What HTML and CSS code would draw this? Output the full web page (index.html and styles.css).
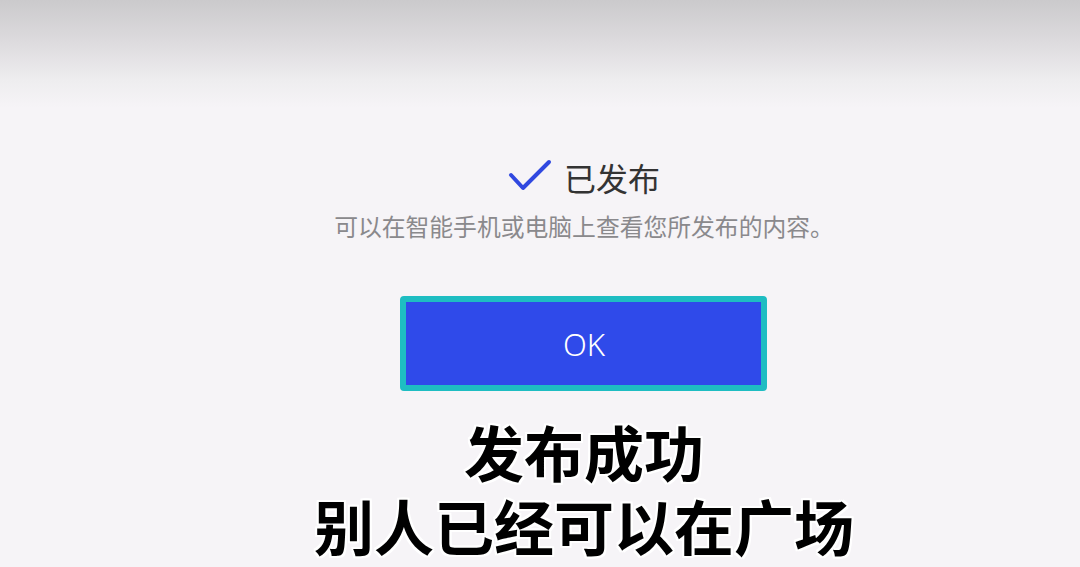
FILE: index.html
```html
<!DOCTYPE html>
<html lang="zh-CN">

<head>
    <meta charset="UTF-8">
    <meta name="viewport" content="width=device-width, initial-scale=1.0">
    <title>已发布</title>
    <link rel="stylesheet" href="styles.css">
</head>

<body>
    <div class="page">
        <div class="done">
            <div class="title">
                <svg class="check" width="44" height="34" viewBox="0 0 44 34">
                    <path d="M3 16 L15 29 L41 3" fill="none" stroke="#3048e0" stroke-width="4" stroke-linecap="round" stroke-linejoin="round"/>
                </svg>
                <span>已发布</span>
            </div>
            <p class="sub">可以在智能手机或电脑上查看您所发布的内容。</p>
            <button class="ok">OK</button>
        </div>
        <div class="caption">
            <div class="line">发布成功</div>
            <div class="line">别人已经可以在广场</div>
        </div>
    </div>
</body>

</html>
```

FILE: styles.css
```css
/* page base */
html, body {
    margin: 0;
    height: 100%;
}

body {
    background: linear-gradient(to bottom, #cbcacc 0px, #dcdadd 40px, #eeedef 80px, #f6f4f7 108px, #f6f4f7 100%);
    font-family: "Noto Sans CJK SC", "Noto Sans", sans-serif;
    overflow: hidden;
}

.page {
    padding-left: 88px;
    padding-top: 150px;
    display: flex;
    flex-direction: column;
    align-items: center;
}

.done {
    display: flex;
    flex-direction: column;
    align-items: center;
}

.title {
    display: flex;
    align-items: center;
    gap: 12px;
    font-size: 32px;
    color: #333333;
    height: 54px;
}

.check {
    margin-top: -2px;
}

.sub {
    margin: 6px 0 0;
    font-size: 23.8px;
    line-height: 32px;
    color: #8a898c;
}

.ok {
    margin-top: 54px;
    width: 367px;
    height: 95px;
    background-color: #2f4aea;
    border: 6px solid #1ebdc2;
    border-radius: 4px;
    color: #ffffff;
    font-family: "Noto Sans", sans-serif;
    font-size: 31px;
    font-weight: 300;
    cursor: pointer;
}

.caption {
    margin-top: 30px;
    display: flex;
    flex-direction: column;
    align-items: center;
    gap: 14px;
    font-size: 60px;
    font-weight: bold;
    color: #000000;
    text-shadow: 2px 0 0 #fff, -2px 0 0 #fff, 0 2px 0 #fff, 0 -2px 0 #fff,
        2px 2px 0 #fff, -2px -2px 0 #fff, 2px -2px 0 #fff, -2px 2px 0 #fff;
}

.line {
    line-height: 60px;
}
```
